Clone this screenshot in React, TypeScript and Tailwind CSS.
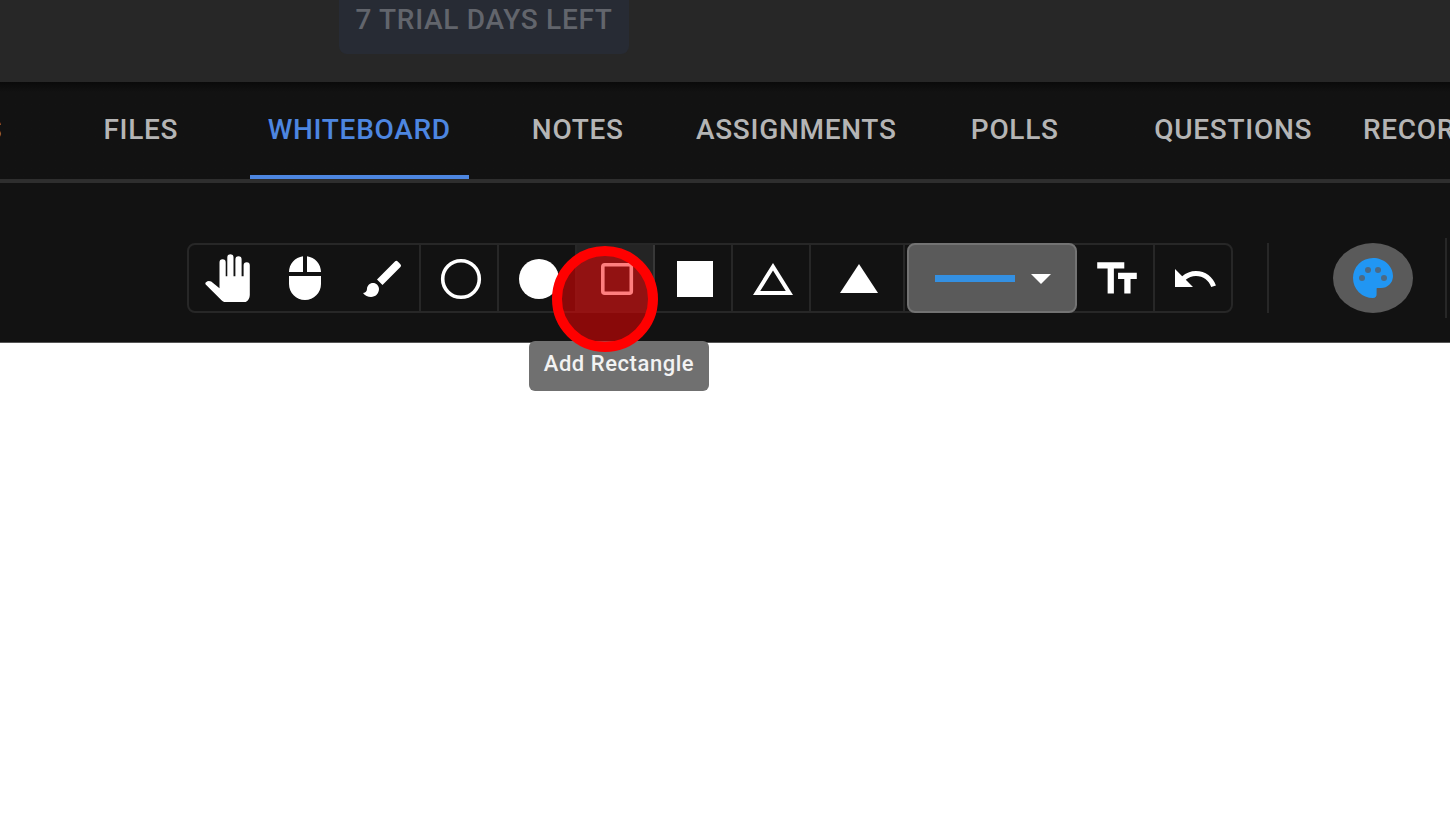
import type { ReactNode } from "react";
import { MdMouse, MdBrush, MdTextFields, MdUndo, MdChangeHistory, MdArrowDropDown } from "react-icons/md";

const tabs = ["ATTENDEES", "FILES", "WHITEBOARD", "NOTES", "ASSIGNMENTS", "POLLS", "QUESTIONS", "RECORDINGS"];

const divided = "w-[78px] border-r-2 border-[#272727] pt-0.5 pl-1";

type ToolProps = { label: string; className?: string; children: ReactNode };

function Tool({ label, className = divided, children }: ToolProps) {
  return (
    <button type="button" aria-label={label} className={`flex items-center justify-center ${className}`}>
      {children}
    </button>
  );
}

function HandIcon() {
  return (
    <svg width="48" height="48" viewBox="0 0 48 48" fill="currentColor">
      <path d="M15.500 34.3V8.4a3.1 3.1 0 0 1 6.2 0v13.9h1.6V3.4a3.1 3.1 0 0 1 6.2 0v18.9h1.9V5.4a3.1 3.1 0 0 1 6.2 0v16.9h2V11.4a3.1 3.1 0 0 1 6.2 0V41c0 4.300-3 7.600-7 7.600H23.500c-2.600 0-4.400-.8-6-2.400L1.700 30.400c-.6-.8-.4-1.500.3-2.100 1.600-1.600 3.300-1.800 5.200-.7z" overflow="visible" />
    </svg>
  );
}

function PaletteIcon() {
  return (
    <svg width="48" height="48" viewBox="0 0 24 24">
      <path
        fill="currentColor"
        d="M12 22A10 10 0 0 1 2 12 10 10 0 0 1 12 2c5.5 0 10 4 10 9a6 6 0 0 1-6 6h-1.8c-.3 0-.4.200-.4.500v2.200c.2 1.300-.6 2.300-1.800 2.300z"
      />
      <g fill="#4b6a86">
        <circle cx="6.5" cy="12" r="1.5" />
        <circle cx="9.5" cy="8" r="1.5" />
        <circle cx="14.5" cy="8" r="1.5" />
        <circle cx="17.5" cy="12" r="1.5" />
      </g>
    </svg>
  );
}

export default function App() {
  return (
    <div className="min-h-screen overflow-hidden bg-white font-['Roboto',sans-serif]">
      <header className="flex h-[82px] items-start bg-[#272727] pl-[339px]">
        <div className="flex h-[54px] w-[290px] justify-center rounded-b-lg bg-[#272b34] pt-1 text-[28px] leading-8 font-medium tracking-wide text-[#62656c]">
          7 TRIAL DAYS LEFT
        </div>
      </header>

      <nav className="overflow-hidden border-b-4 border-[#2e2e2e] bg-linear-to-b from-[#0a0a0a] to-[#121212] to-[10px]">
        <div className="-ml-[187px] grid h-[97px] w-[1748px] grid-cols-8">
          {tabs.map((tab) => (
            <button
              key={tab}
              type="button"
              className={`border-b-4 pt-0.5 text-[28px] leading-8 font-medium tracking-wide ${
                tab === "WHITEBOARD" ? "border-[#4d86e0] text-[#4d86e0]" : "border-transparent text-[#b5b5b5]"
              }`}
            >
              {tab}
            </button>
          ))}
        </div>
      </nav>

      <section className="flex h-40 items-center border-b border-[#555] bg-[#121212] pt-[60px] pb-[29px] pl-[187px] text-white">
        <div className="flex h-[70px] shrink-0 rounded-lg border-2 border-[#272727]">
          <Tool label="Pan" className="w-[77px]"><HandIcon /></Tool>
          <Tool label="Select" className="w-[77px]"><MdMouse size={48} /></Tool>
          <Tool label="Brush"><MdBrush size={48} /></Tool>
          <Tool label="Add outlined circle">
            <svg width="48" height="48" viewBox="0 0 48 48" fill="none"><circle cx="24" cy="24" r="18.3" stroke="currentColor" strokeWidth="3.6" /></svg>
          </Tool>
          <Tool label="Add circle">
            <svg width="48" height="48" viewBox="0 0 48 48" fill="currentColor"><circle cx="24" cy="24" r="20" /></svg>
          </Tool>
          <div className="relative flex">
            <Tool label="Add Rectangle" className="w-[78px] border-r-2 border-[#383838] bg-[#242424] pt-0.5 pl-1">
              <svg width="48" height="48" viewBox="0 0 48 48" fill="none"><rect x="9.8" y="9.7" width="28.5" height="28.5" rx="2" stroke="currentColor" strokeWidth="3.6" /></svg>
            </Tool>
            <div role="tooltip" className="absolute top-24 -left-12 h-[50px] w-[180px] rounded-md bg-[#707070] pt-[9px] text-center text-[22px] leading-7 font-medium tracking-wide whitespace-nowrap text-[#f2f2f2]">
              Add Rectangle
            </div>
            <div className="absolute top-px -left-[25px] size-[106px] rounded-full border-[10px] border-[#ff0000] bg-[#ff0000]/50" />
          </div>
          <Tool label="Add square">
            <svg width="48" height="48" viewBox="0 0 48 48" fill="currentColor"><path d="M6 6h36v36H6z" /></svg>
          </Tool>
          <Tool label="Add outlined triangle"><MdChangeHistory size={48} /></Tool>
          <Tool label="Add triangle" className="w-[94px] border-r-2 border-[#272727] pt-0.5 pl-1">
            <svg width="48" height="48" viewBox="0 0 48 48" fill="currentColor"><path d="M24 9 43 38H5z" /></svg>
          </Tool>
          <button type="button" aria-label="Line width" className="-my-0.5 ml-0.5 flex w-[170px] items-center rounded-lg border-2 border-[#737373] bg-[#5a5a5a] pl-[26px]">
            <span className="h-[7px] w-20 bg-[#3490e2]" />
            <MdArrowDropDown size={48} className="ml-0.5" />
          </button>
          <Tool label="Add text"><MdTextFields size={50} /></Tool>
          <Tool label="Undo" className="w-[76px] pt-0.5 pl-1"><MdUndo size={48} /></Tool>
        </div>
        <div className="ml-[34px] h-[70px] w-0.5 shrink-0 bg-[#272727]" />
        <button type="button" aria-label="Colour palette" className="ml-16 flex h-[70px] w-20 shrink-0 items-center justify-center rounded-[50%] bg-[#5a5a5a] text-[#2196f3]">
          <PaletteIcon />
        </button>
        <div className="ml-8 h-20 w-0.5 shrink-0 bg-[#272727]" />
      </section>
      <main aria-label="Whiteboard" className="bg-white" />
    </div>
  );
}
